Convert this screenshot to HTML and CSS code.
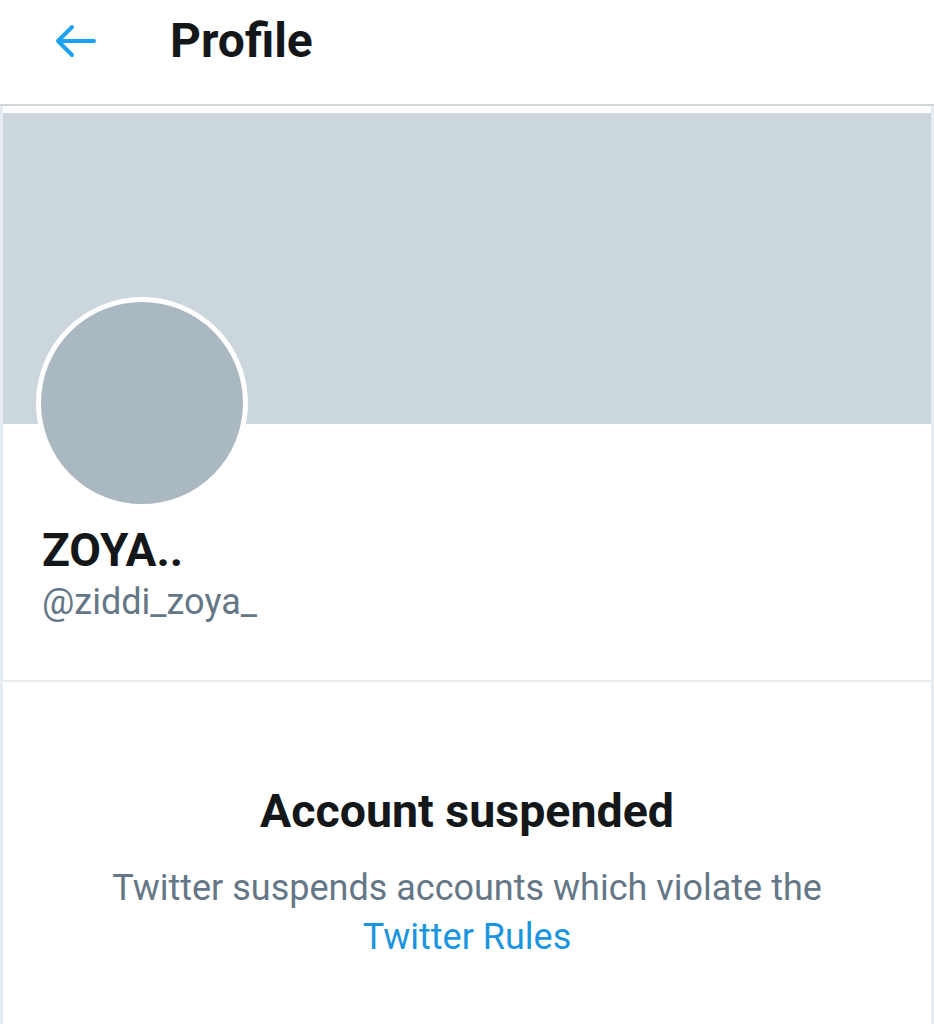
FILE: index.html
```html
<!DOCTYPE html>
<html lang="en">
<head>
<meta charset="utf-8">
<title>Profile</title>
<link rel="stylesheet" href="styles.css">
</head>
<body>
<header class="topbar">
  <svg class="back" width="44" height="40" viewBox="0 0 44 40" aria-hidden="true">
    <path d="M4 20 H40 M4 20 L18 6 M4 20 L18 34" fill="none" stroke="#1da1f2" stroke-width="4" stroke-linecap="round" stroke-linejoin="round"/>
  </svg>
  <h1 class="title">Profile</h1>
</header>
<main class="page">
  <div class="banner"></div>
  <div class="avatar"></div>
  <section class="info">
    <div class="name">ZOYA..</div>
    <div class="handle">@ziddi_zoya_</div>
  </section>
  <section class="notice">
    <div class="notice-title">Account suspended</div>
    <p class="notice-text">Twitter suspends accounts which violate the <a class="link" href="#">Twitter Rules</a></p>
  </section>
</main>
</body>
</html>
```
FILE: styles.css
```css
html, body {
  margin: 0;
  padding: 0;
  background: #ffffff;
}
body {
  font-family: Roboto, "Noto Sans", Arial, sans-serif;
  width: 934px;
  height: 1024px;
  overflow: hidden;
}
.topbar {
  box-sizing: border-box;
  height: 106px;
  border-bottom: 2px solid #cfd6d9;
  display: flex;
  align-items: flex-start;
  padding-top: 13px;
}
.back {
  margin-left: 54px;
  margin-top: 8px;
  flex: none;
}
.title {
  margin: 0 0 0 72px;
  font-size: 48px;
  line-height: 56px;
  font-weight: 700;
  color: #14171a;
}
.page {
  box-sizing: border-box;
  border-left: 3px solid #e6ecf0;
  border-right: 3px solid #e6ecf0;
  padding-top: 7px;
  min-height: 918px;
}
.banner {
  height: 311px;
  background: #ccd6dd;
}
.avatar {
  box-sizing: border-box;
  width: 212px;
  height: 212px;
  margin: -127px 0 0 33px;
  border: 5px solid #ffffff;
  border-radius: 50%;
  background: #aab8c2;
}
.info {
  padding: 14px 0 57px 39px;
  border-bottom: 2px solid #e6ecf0;
}
.name {
  font-size: 46px;
  line-height: 54px;
  font-weight: 700;
  color: #14171a;
}
.handle {
  margin-top: 4px;
  font-size: 36px;
  line-height: 42px;
  color: #657786;
}
.notice {
  padding-top: 102px;
  text-align: center;
}
.notice-title {
  font-size: 46.5px;
  line-height: 54px;
  font-weight: 700;
  color: #14171a;
}
.notice-text {
  margin: 26px auto 0;
  width: 780px;
  font-size: 36px;
  line-height: 49px;
  color: #657786;
}
.link {
  color: #1b95e0;
  text-decoration: none;
}
```
